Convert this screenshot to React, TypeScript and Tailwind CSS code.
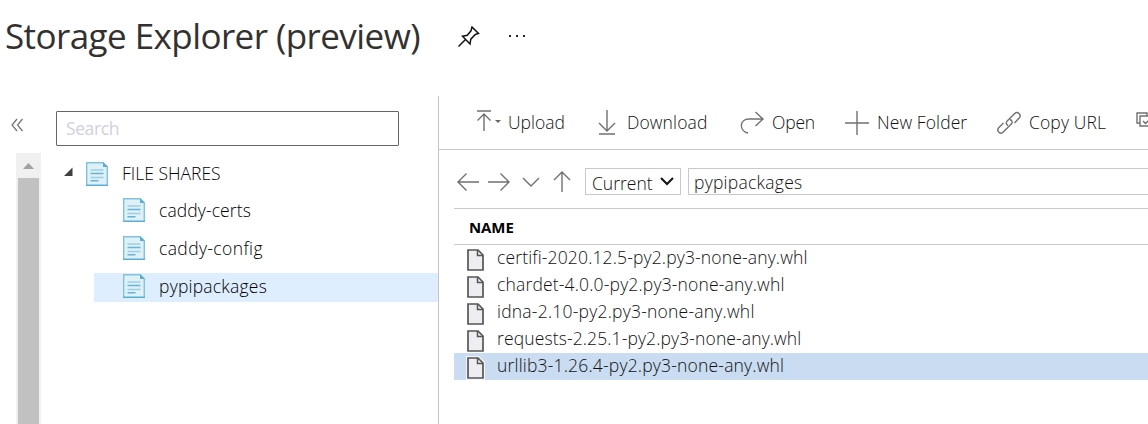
import React from "react";

function Share() {
  return (
    <svg width="22" height="24" viewBox="0 0 22 24" className="shrink-0">
      <path d="M.7.7H17L21.3 5v18.3H.7z" fill="#dff0f6" stroke="#7fc3e0" strokeWidth="1.4" />
      <path d="M17 0l5 5h-5z" fill="#5aaed4" />
      <path d="M0 23.4h22" stroke="#5aaed4" strokeWidth="1.2" />
      <path d="M4.500 8h13M4.500 15.500h13" stroke="#9bd0e6" strokeWidth="1.4" />
      <path d="M4.500 11.500h13M4.500 18.700h8" stroke="#65b5d9" strokeWidth="1.4" />
    </svg>
  );
}

function FileIcon() {
  return (
    <svg width="19" height="24" viewBox="0 0 19 24" className="mt-[3px] shrink-0">
      <path d="M0 0h13l6 6v18H0z" fill="#fff" fillOpacity=".75" />
      <path d="M2 2h10l5 5v15H2z" fill="#eeeef2" stroke="#565656" strokeWidth="1.7" />
      <path d="M11.500 2v5.500H17" fill="none" stroke="#565656" strokeWidth="1.500" />
    </svg>
  );
}

function Line({ d, w, h, className = "", sw = 1.4 }: { d: string; w: number; h: number; className?: string; sw?: number }) {
  return (
    <svg width={w} height={h} viewBox={`0 0 ${w} ${h}`} className={`shrink-0 ${className}`} fill="none" stroke="#707070" strokeWidth={sw}>
      <path d={d} />
    </svg>
  );
}

const shares = [
  { name: "caddy-certs", row: "mt-[9px]", text: "tracking-[0.1px]" },
  { name: "caddy-config", row: "mt-[9px]", text: "tracking-[0.38px]" },
  { name: "pypipackages", row: "mt-[9px] bg-[#deeeff]", text: "tracking-[0.22px]" },
];

const files = [
  { name: "certifi-2020.12.5-py2.py3-none-any.whl", text: "tracking-[0.15px]" },
  { name: "chardet-4.0.0-py2.py3-none-any.whl", text: "tracking-[0.17px]" },
  { name: "idna-2.10-py2.py3-none-any.whl", text: "tracking-[0.22px]" },
  { name: "requests-2.25.1-py2.py3-none-any.whl", text: "tracking-[0.12px]" },
  { name: "urllib3-1.26.4-py2.py3-none-any.whl", text: "tracking-[0.19px]" },
];

export default function App() {
  return (
    <div className="flex h-[424px] w-[1148px] flex-col overflow-hidden bg-white font-['Open_Sans',sans-serif] text-[17.500px] font-light whitespace-nowrap text-[#111]">
      <header className="flex h-[96px] shrink-0 items-start pl-[5px]">
        <h1 className="w-[453px] pt-[11px] text-[35px] leading-[50px] font-normal tracking-[-0.57px] text-[#323130]">Storage Explorer (preview)</h1>
        <svg width="22" height="22" viewBox="0 0 22 22" className="mt-[26px] shrink-0" fill="none" stroke="#111" strokeWidth="1.500">
          <path d="M14 1l6.500 6.500-3.200 1-4.500 4.700-.8 4.800-7.500-7.800 4.800-1L13 4.800zM7.500 13.500l-7 7" />
        </svg>
        <svg width="18" height="4" viewBox="0 0 18 4" className="mt-[34px] ml-[28px]" fill="#222">
          <path d="M1 1h2v2H1zM8 1h2v2H8zM15 1h2v2h-2z" />
        </svg>
      </header>
      <div className="flex h-[328px]">
        <div className="flex w-[56px] shrink-0 flex-col">
          <Line w={14} h={14} sw={1.2} className="mt-[22px] ml-[10px]" d="M7 1L2 7l5 6M12.500 1l-5 6 5 6" />
          <div className="mt-[21px] ml-[16px] flex w-[25px] flex-1 flex-col items-center bg-[#f0f0f0]">
            <svg width="11" height="6" viewBox="0 0 11 6" className="mt-[10px]" fill="#a2a2a2"><path d="M5.500 0L11 6H0z" /></svg>
            <div className="mt-[9px] w-[21px] flex-1 bg-[#c1c1c1]" />
          </div>
        </div>
        <aside className="flex w-[382px] shrink-0 flex-col pt-[15px]">
          <div className="flex h-[35px] w-[343px] items-center rounded-[1px] border border-[#666] pl-[9px] font-normal tracking-[-0.4px] text-[#d0d0df]">Search</div>
          <div className="mt-[13px] flex h-[29px] items-center">
            <svg width="10" height="10" viewBox="0 0 10 10" className="-mt-[4px] mr-[13px] ml-[7px]"><path d="M9.500 .5v8.500H1z" fill="#404040" /></svg>
            <Share />
            <span className="ml-[14px] text-black">FILE SHARES</span>
          </div>
          {shares.map((s) => (
            <div key={s.name} className={`ml-[38px] flex h-[29px] items-center pl-[29px] text-black ${s.row}`}>
              <div className="-mt-[4px]"><Share /></div>
              <span className={`-mt-[2px] ml-[14px] ${s.text}`}>{s.name}</span>
            </div>
          ))}
        </aside>
        <main className="flex min-w-0 flex-1 flex-col border-l border-[#c4c4ca]">
          <div className="flex h-[54px] shrink-0 items-center border-b border-[#c8c8d4]">
            <div className="flex w-[123px] shrink-0 items-center pl-[37px]">
              <svg width="25" height="21" viewBox="0 0 25 21" className="mt-[-5px] mr-[7px] shrink-0" fill="none" stroke="#707070" strokeWidth="1.4">
                <path d="M1 1h14M8 21V4M1.500 10.500L8 4l6.500 6.500" />
                <path d="M19 10h6l-3 3z" fill="#666" stroke="none" />
              </svg>
              <span>Upload</span>
            </div>
            <div className="flex w-[142px] shrink-0 items-center pl-[36px]">
              <Line w={18} h={25} className="mr-[11px]" d="M9 0v21M1 13l8 8 8-8M1 24h16" />
              <span className="tracking-[0.12px]">Download</span>
            </div>
            <div className="flex w-[107px] shrink-0 items-center pl-[36px]">
              <Line w={24} h={23} className="mr-[8px]" d="M23 8H9C-1 8-1 20 8 22M15.500 1L23 8l-7.500 7" />
              <span className="tracking-[-0.2px]">Open</span>
            </div>
            <div className="flex w-[152px] shrink-0 items-center pl-[34px]">
              <Line w={24} h={24} className="mr-[8px]" d="M0 12h24M12 0v24" />
              <span className="tracking-[0.1px]">New Folder</span>
            </div>
            <div className="flex w-[139px] shrink-0 items-center pl-[34px]">
              <Line w={24} h={24} className="mr-[8px]" d="M11 14.500c-2-1-2.300-3-.8-4.500l7.300-7.300c3-3 7.500 1 4.600 4.400L17.500 12M13 8.500c2.300 1 2.800 3 1.300 4.500L6.300 21c-3 3-7.300-1-4.600-4.200L6.500 12" />
              <span className="tracking-[0.12px]">Copy URL</span>
            </div>
            <Line w={18} h={16} className="mt-[-5px] ml-[34px]" d="M4 11H1V1h10v3M4 4h13v10H4zM7 9l2.500 2.500L14 7" />
          </div>
          <div className="flex h-[58px] shrink-0 items-start pt-[18px] pl-[18px]">
            <Line w={22} h={20} className="mt-[4px]" d="M22 10H1M9.500 1.500L1 10l8.500 8.500" />
            <Line w={22} h={20} className="mt-[4px] ml-[9px]" d="M0 10h21M12.500 1.500L21 10l-8.500 8.500" />
            <Line w={18} h={11} className="mt-[9px] ml-[12px]" d="M1 1l8 8 8-8" />
            <Line w={18} h={21} className="mt-[3px] ml-[13px]" d="M9 21V1M1 9l8-8 8 8" />
            <div className="ml-[14px] flex h-[27px] w-[96px] shrink-0 items-center border border-[#c8c8d4] pl-[6px]">
              <span className="w-[68px] pt-[3px]">Current</span>
              <svg width="14" height="9" viewBox="0 0 14 9" fill="none" stroke="#111" strokeWidth="2"><path d="M1 1l6 6 6-6" /></svg>
            </div>
            <div className="ml-[7px] flex h-[27px] flex-1 items-center border border-r-0 border-[#c8c8d4] pt-[2px] pl-[5px]"><span className="tracking-[0.25px]">pypipackages</span></div>
          </div>
          <div className="ml-[15px] flex h-[37px] shrink-0 items-center border-y border-[#c8c8d8] pt-[2px] pl-[15px] text-[15px] font-bold tracking-[-0.1px] text-black">NAME</div>
          <div className="ml-[15px]">
            {files.map((f, i) => (
              <div key={f.name} className={`flex h-[27px] pl-[12px] ${i === 4 ? "bg-[#c9dcf2]" : ""}`}>
                <FileIcon />
                <span className={`ml-[12px] leading-[24px] ${f.text}`}>{f.name}</span>
              </div>
            ))}
          </div>
        </main>
      </div>
    </div>
  );
}
